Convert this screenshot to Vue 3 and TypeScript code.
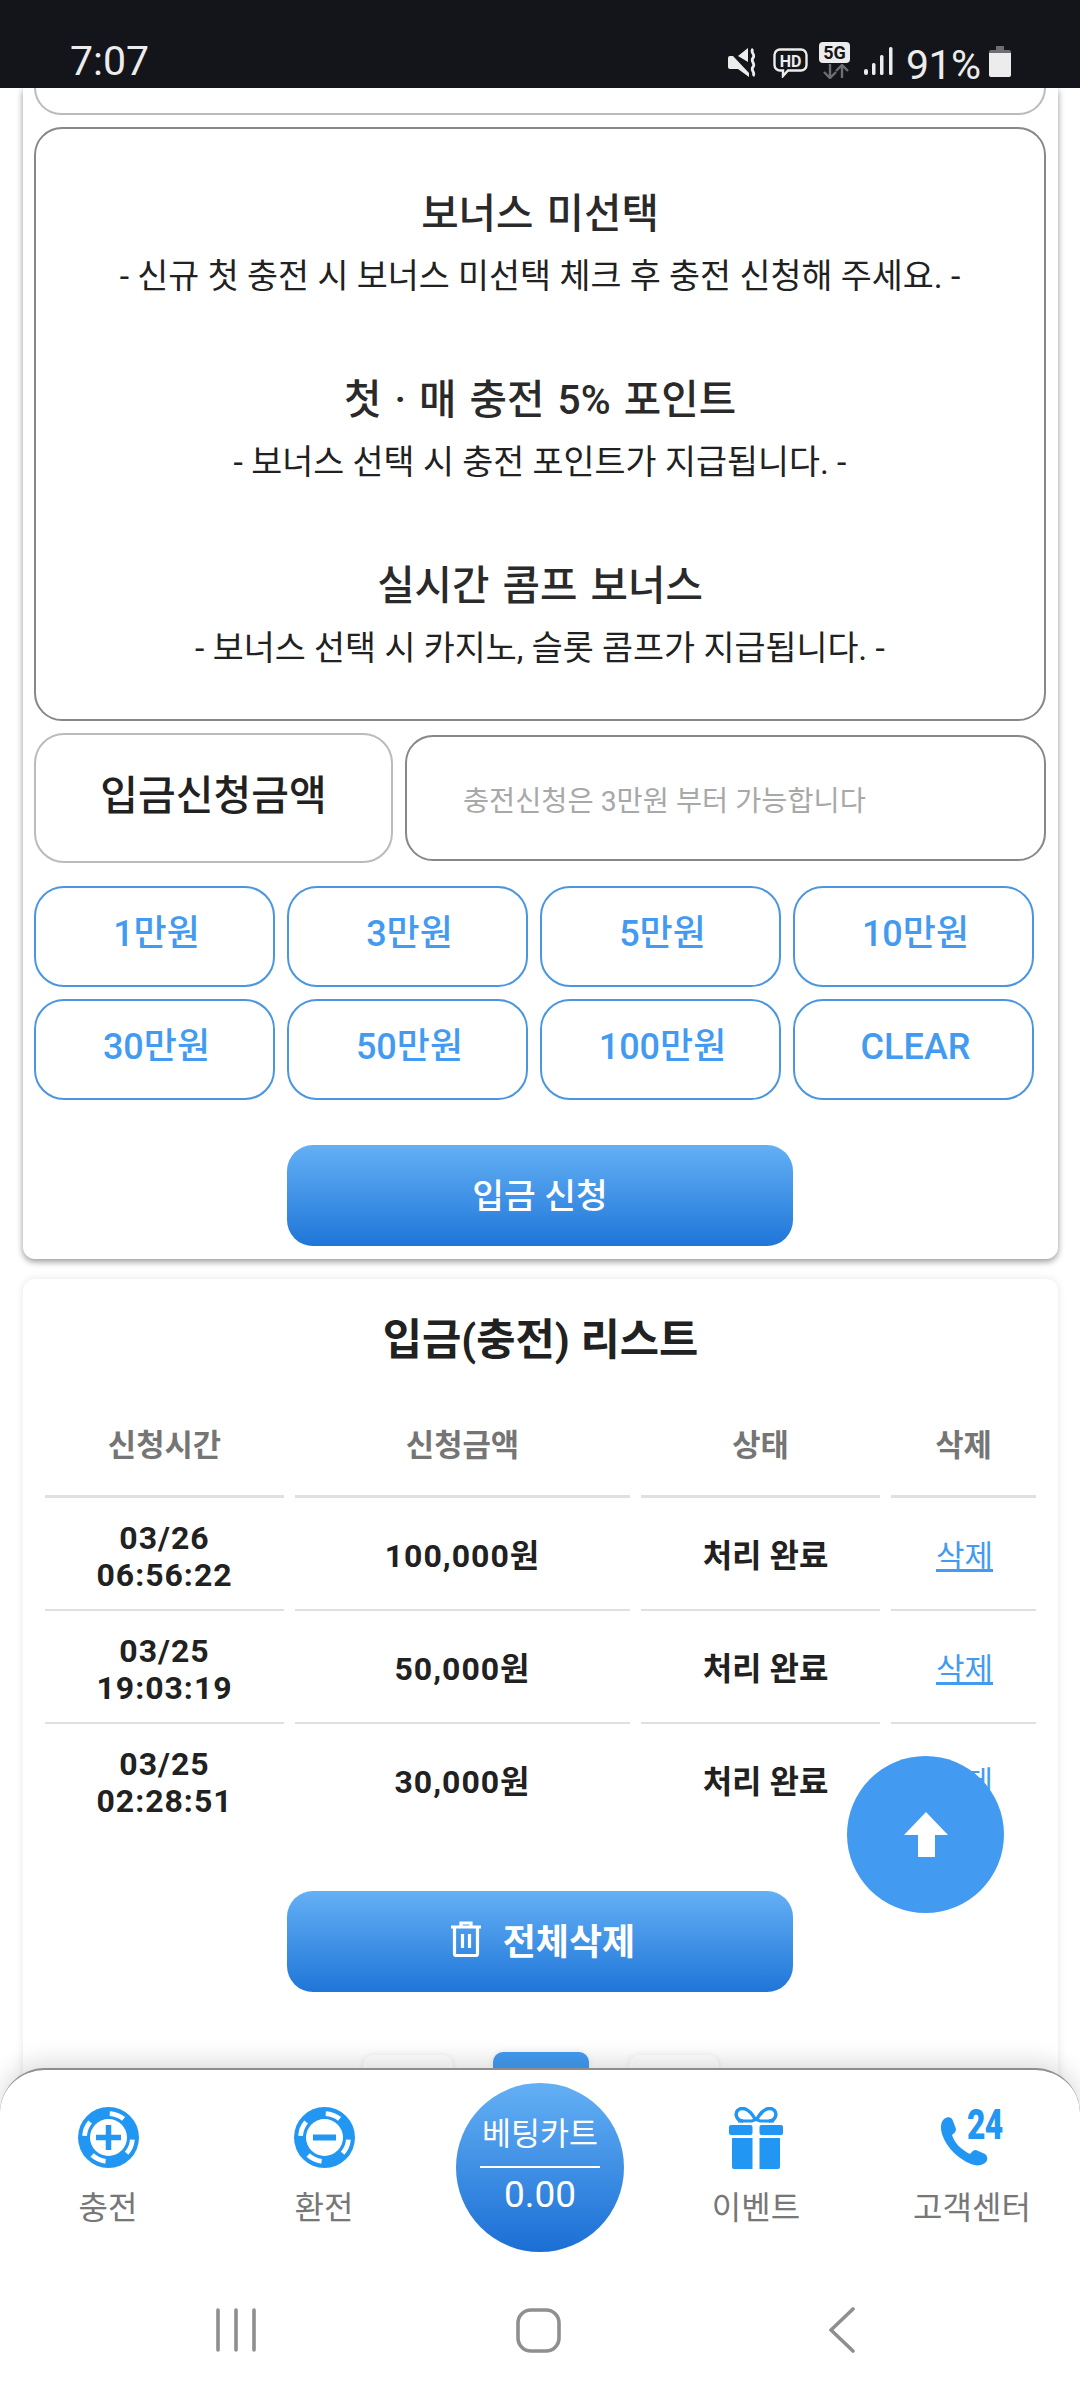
<script setup lang="ts">
const bonuses = [
  { title: '보너스 미선택', note: '- 신규 첫 충전 시 보너스 미선택 체크 후 충전 신청해 주세요. -' },
  { title: '첫 · 매 충전 5% 포인트', note: '- 보너스 선택 시 충전 포인트가 지급됩니다. -' },
  { title: '실시간 콤프 보너스', note: '- 보너스 선택 시 카지노, 슬롯 콤프가 지급됩니다. -' },
]
const amounts = ['1만원', '3만원', '5만원', '10만원', '30만원', '50만원', '100만원', 'CLEAR']
const rows = [
  { date: '03/26', time: '06:56:22', amount: '100,000원' },
  { date: '03/25', time: '19:03:19', amount: '50,000원' },
  { date: '03/25', time: '02:28:51', amount: '30,000원' },
]
// Dash angles for the ring of a casino chip, in degrees.
const chipArcs = [-69, 23, 115, 202]
function arcPath(centre: number): string {
  const r = 24
  const a = ((centre - 18) * Math.PI) / 180
  const b = ((centre + 18) * Math.PI) / 180
  const p = (t: number) => `${(30.5 + r * Math.cos(t)).toFixed(2)} ${(30.5 + r * Math.sin(t)).toFixed(2)}`
  return `M${p(a)}A${r} ${r} 0 0 1 ${p(b)}`
}
const chipDashes = chipArcs.map(arcPath)
</script>

<template>
  <div class="screen">
    <header class="status">
      <span class="clock">7:07</span>
      <div class="status-icons">
        <svg class="ic-mute" width="30" height="29" viewBox="0 0 30 29">
          <path d="M10 8L20 0v14z" fill="#ececec" />
          <path d="M0 10a2 2 0 0 1 2-2h3l16 17v4L10 21H2a2 2 0 0 1-2-2z" fill="#ececec" />
          <path d="M25 1c-3.500 3 3 5.500 0 9s3 5.500 0 9 3 5.500 0 9" fill="none" stroke="#ececec" stroke-width="2.800" />
        </svg>
        <svg class="ic-hd" width="35" height="30" viewBox="0 0 35 30">
          <path d="M7 1.500h21a5.500 5.500 0 0 1 5.500 5.500v10a5.500 5.500 0 0 1-5.500 5.500H15l-5 5.500v-5.500H7A5.500 5.500 0 0 1 1.500 17V7A5.500 5.500 0 0 1 7 1.500z" fill="none" stroke="#ececec" stroke-width="2.400" />
          <text x="17.500" y="18.500" text-anchor="middle" class="hd-text">HD</text>
        </svg>
        <div class="five-g">
          <span class="five-g-tag">5G</span>
          <svg width="28" height="15" viewBox="0 0 28 15">
            <path d="M9 0v13M3 8l6 6 6-6M21 14V1M15 7l6-6 6 6" fill="none" stroke="#6e6e70" stroke-width="2.400" />
          </svg>
        </div>
        <svg class="signal" width="29" height="30" viewBox="0 0 29 30">
          <rect x="0" y="23" width="4" height="6" rx="2" fill="#ececec" />
          <rect x="8" y="17" width="3.500" height="12" rx="1.500" fill="#ececec" />
          <rect x="16" y="9" width="3.500" height="20" rx="1.500" fill="#ececec" />
          <rect x="25" y="1" width="3.500" height="28" rx="1.500" fill="#ececec" />
        </svg>
        <span class="percent">91%</span>
        <svg class="battery" width="22" height="32" viewBox="0 0 22 32">
          <path d="M7 1h8v4h5a2 2 0 0 1 2 2v4H0V7a2 2 0 0 1 2-2h5z" fill="#6e6e70" />
          <path d="M0 8h22v22a2 2 0 0 1-2 2H2a2 2 0 0 1-2-2z" fill="#ececec" />
        </svg>
      </div>
    </header>

    <main class="page">
      <section class="card card-form">
        <div class="cut-box"></div>
        <div class="bonus-box">
          <div v-for="b in bonuses" :key="b.title" class="bonus">
            <h3>{{ b.title }}</h3>
            <p>{{ b.note }}</p>
          </div>
        </div>
        <div class="amount-row">
          <div class="amount-label">입금신청금액</div>
          <div class="amount-input">충전신청은 3만원 부터 가능합니다</div>
        </div>
        <div class="amount-grid">
          <button v-for="a in amounts" :key="a" class="amount-btn">{{ a }}</button>
        </div>
        <button class="primary submit">입금 신청</button>
      </section>

      <section class="card card-list">
        <h2>입금(충전) 리스트</h2>
        <table>
          <colgroup>
            <col class="c-time" /><col class="c-amount" /><col class="c-state" /><col class="c-del" />
          </colgroup>
          <thead>
            <tr><th>신청시간</th><th>신청금액</th><th>상태</th><th>삭제</th></tr>
          </thead>
          <tbody>
            <tr v-for="r in rows" :key="r.time">
              <td>{{ r.date }}<br />{{ r.time }}</td>
              <td>{{ r.amount }}</td>
              <td class="state">처리 완료</td>
              <td class="del"><a>삭제</a></td>
            </tr>
          </tbody>
        </table>
        <button class="primary clear-all">
          <svg width="30" height="36" viewBox="0 0 30 36" fill="none" stroke="#fff" stroke-width="3.200">
            <path d="M0 6h30M10 6V2h10v4" />
            <path d="M3.500 6v27a1.500 1.500 0 0 0 1.500 1.500h20a1.500 1.500 0 0 0 1.500-1.500V6" />
            <path d="M11.500 13v14M18.500 13v14" />
          </svg>
          <span>전체삭제</span>
        </button>
        <nav class="pager">
          <span class="pg"></span>
          <span class="pg pg-on"></span>
          <span class="pg"></span>
        </nav>
      </section>
    </main>

    <button class="to-top" aria-label="위로">
      <svg width="44" height="45" viewBox="0 0 44 45"><path d="M22 0l22 23H31v22H14V23H0z" fill="#fff" /></svg>
    </button>

    <footer class="dock">
      <div class="tabs">
        <div class="tab">
          <svg class="tab-ic" width="61" height="61" viewBox="0 0 61 61">
            <circle cx="30.500" cy="30.500" r="30.500" fill="#2196f3" />
            <path v-for="d in chipDashes" :key="d" :d="d" fill="none" stroke="#fff" stroke-width="4.800" />
            <circle cx="30.500" cy="30.500" r="18.500" fill="#fff" />
            <path d="M30.500 18v25M18 30.500h25" stroke="#2196f3" stroke-width="5.500" />
          </svg>
          <span>충전</span>
        </div>
        <div class="tab">
          <svg class="tab-ic" width="61" height="61" viewBox="0 0 61 61">
            <circle cx="30.500" cy="30.500" r="30.500" fill="#2196f3" />
            <path v-for="d in chipDashes" :key="d" :d="d" fill="none" stroke="#fff" stroke-width="4.800" />
            <circle cx="30.500" cy="30.500" r="18.500" fill="#fff" />
            <path d="M19 30.500h23" stroke="#2196f3" stroke-width="6" />
          </svg>
          <span>환전</span>
        </div>
        <div class="tab tab-cart">
          <div class="cart">
            <span class="cart-name">베팅카트</span>
            <span class="cart-value">0.00</span>
          </div>
        </div>
        <div class="tab">
          <svg class="tab-ic" width="54" height="62" viewBox="0 0 54 62">
            <path d="M27 14C22 3 14-1 9 3c-4 4-1 11 5 11M27 14C32 3 40-1 45 3c4 4 1 11-5 11" fill="none" stroke="#2196f3" stroke-width="3.400" />
            <path d="M9 14h14l4-2 4 2h14" stroke="#2196f3" stroke-width="3" />
            <rect x="0" y="18" width="23.500" height="10" rx="2" fill="#2196f3" />
            <rect x="30.500" y="18" width="23.500" height="10" rx="2" fill="#2196f3" />
            <path d="M3 31h20.500v31H5a2 2 0 0 1-2-2zM30.500 31H51v29a2 2 0 0 1-2 2H30.500z" fill="#2196f3" />
          </svg>
          <span>이벤트</span>
        </div>
        <div class="tab">
          <div class="tab-ic phone">
            <svg width="47" height="49" viewBox="0 0 47 49">
              <path d="M3 2C7-1 11 0 12 4l3 8c0 3-2 4-4 6 3 9 10 15 18 19 2-2 3-4 6-4l9 4c3 2 3 7 0 9-4 3-9 3-14 1C18 42 6 32 1 17-1 10 0 5 3 2z" fill="#2196f3" />
            </svg>
            <span class="phone-24">24</span>
          </div>
          <span>고객센터</span>
        </div>
      </div>
      <div class="softkeys">
        <svg width="40" height="44" viewBox="0 0 40 44" fill="none" stroke="#8f8f8f" stroke-width="3.600" stroke-linecap="round">
          <path d="M2 2v40M20 2v40M38 2v40" />
        </svg>
        <svg class="key-home" width="45" height="45" viewBox="0 0 45 45" fill="none" stroke="#8f8f8f" stroke-width="3.600">
          <rect x="2" y="2" width="41" height="41" rx="13" />
        </svg>
        <svg class="key-back" width="26" height="46" viewBox="0 0 26 46" fill="none" stroke="#8f8f8f" stroke-width="3.600" stroke-linecap="round">
          <path d="M24 2L2 23l22 21" />
        </svg>
      </div>
    </footer>
  </div>
</template>

<style>
body { margin: 0; background: #fff; }
</style>

<style scoped>
.screen {
  position: relative;
  width: 1080px;
  height: 2400px;
  overflow: hidden;
  display: flex;
  flex-direction: column;
  background: #fff;
  font-family: Roboto, "Noto Sans CJK KR", sans-serif;
  color: #212121;
}

/* System status bar */
.status {
  flex: none;
  height: 88px;
  box-sizing: border-box;
  padding: 0 70px;
  display: flex;
  justify-content: space-between;
  align-items: flex-start;
  background: #14151a;
  color: #ececec;
  position: relative;
  z-index: 2;
}
.clock { font-size: 41px; font-weight: 400; line-height: 46px; margin-top: 38px; }
.status-icons { display: flex; align-items: flex-start; position: absolute; left: 728px; top: 42px; }
.ic-mute { margin-top: 6px; }
.ic-hd { margin: 6px 0 0 15px; }
.hd-text { font: 700 16px Roboto, sans-serif; fill: #ececec; }
.five-g { display: flex; flex-direction: column; align-items: center; margin-left: 11px; width: 31px; }
.five-g-tag {
  width: 31px;
  height: 21px;
  background: #ececec;
  color: #14151a;
  border-radius: 4px;
  font: 700 18px/21px Roboto, sans-serif;
  text-align: center;
}
.five-g svg { margin-top: 1px; }
.signal { margin: 4px 0 0 14px; }
.percent { font-size: 41px; font-weight: 400; line-height: 46px; margin-left: 13px; letter-spacing: -0.5px; }
.battery { margin: 3px 0 0 8px; }

.page { flex: 1; min-height: 0; overflow: hidden; }
.card {
  margin: 0 22px 0 23px;
  background: #fff;
  border-radius: 0 0 12px 12px;
  box-shadow: 0 3px 6px rgba(0, 0, 0, 0.35), 0 0 8px rgba(0, 0, 0, 0.08);
  box-sizing: border-box;
}
.card-form { height: 1171px; padding: 0 12px 0 11px; display: flex; flex-direction: column; }

.cut-box {
  height: 27px;
  flex: none;
  box-sizing: border-box;
  border: 2px solid #bbb;
  border-top: 0;
  border-radius: 0 0 28px 28px;
}
.bonus-box {
  flex: none;
  height: 594px;
  margin-top: 12px;
  box-sizing: border-box;
  border: 2px solid #888;
  border-radius: 28px;
  padding-top: 57px;
  text-align: center;
}
.bonus { height: 186px; }
.bonus h3 { margin: 0; font-size: 40.700px; font-weight: 500; line-height: 56px; word-spacing: 3px; color: #2a2a2a; }
.bonus p { margin: 7px 0 0; font-size: 33.700px; font-weight: 400; line-height: 56px; }

.amount-row { flex: none; display: flex; align-items: center; gap: 12px; margin-top: 12px; height: 130px; }
.amount-label {
  width: 359px;
  height: 130px;
  box-sizing: border-box;
  border: 2px solid #bbb;
  border-radius: 30px;
  font-size: 41px;
  font-weight: 500;
  line-height: 122px;
  text-align: center;
}
.amount-input {
  flex: 1;
  height: 126px;
  box-sizing: border-box;
  border: 2px solid #888;
  border-radius: 28px;
  padding-left: 56px;
  font-size: 28.400px;
  line-height: 130px;
  color: #a8a8a8;
}
.amount-grid {
  flex: none;
  display: grid;
  grid-template-columns: repeat(4, 241px);
  grid-auto-rows: 101px;
  column-gap: 12px;
  row-gap: 12px;
  margin-top: 23px;
}
.amount-btn {
  border: 2px solid #4a96e0;
  border-radius: 30px;
  background: #fff;
  color: #429bf0;
  font: 500 36px/1 Roboto, "Noto Sans CJK KR", sans-serif;
  padding: 0 0 5px 4px;
}
.primary {
  display: flex;
  align-items: center;
  justify-content: center;
  width: 506px;
  height: 101px;
  margin-left: 253px;
  border: 0;
  border-radius: 26px;
  background: linear-gradient(#64b0f5, #1f76d8);
  color: #fff;
  font-family: Roboto, "Noto Sans CJK KR", sans-serif;
}
.submit { flex: none; margin-top: 45px; padding-bottom: 6px; font-size: 34.500px; font-weight: 500; }

.card-list {
  height: 1000px;
  margin-top: 20px;
  padding: 0 11px;
  border-radius: 12px 12px 0 0;
  box-shadow: 0 0 8px rgba(0, 0, 0, 0.1);
}
.card-list h2 { margin: 0; padding-top: 28px; font-size: 42.700px; font-weight: 700; line-height: 66px; text-align: center; }
table { width: 100%; margin-top: 17px; border-collapse: separate; border-spacing: 11px 0; table-layout: fixed; }
.c-time, .c-state { width: 239px; }
.c-amount { width: 335px; }
.c-del { width: 145px; }
th {
  height: 105px;
  padding: 0;
  border-bottom: 3px solid #e0e0e0;
  color: #757575;
  font-size: 30.800px;
  font-weight: 700;
  vertical-align: middle;
}
td {
  height: 105px;
  padding: 6px 0 0;
  border-bottom: 2px solid #e0e0e0;
  text-align: center;
  font-size: 32px;
  font-weight: 700;
  line-height: 37px;
  letter-spacing: 1px;
}
tbody tr:last-child td { border-bottom: 0; }
.state { letter-spacing: 0; padding-left: 10px; }
.del { font-size: 31px; font-weight: 400; letter-spacing: 0; padding-left: 2px; }
.del a { color: #429bf0; text-decoration: underline; }

.clear-all { gap: 22px; margin-top: 56px; padding: 0 0 6px 6px; font-size: 36px; font-weight: 700; }
.pager { display: flex; justify-content: center; align-items: flex-start; gap: 40px; margin-top: 60px; }
.pg { width: 90px; height: 60px; margin-top: 3px; border-radius: 10px; background: #fff; box-shadow: 0 0 6px rgba(0, 0, 0, 0.08); }
.pg-on { width: 96px; margin-top: 0; background: #429bf0; }

/* Floating scroll-to-top control */
.to-top {
  position: absolute;
  left: 847px;
  top: 1756px;
  width: 157px;
  height: 157px;
  padding: 0;
  border: 0;
  border-radius: 50%;
  background: #429bf0;
  display: flex;
  align-items: center;
  justify-content: center;
}

/* Fixed bottom dock with the tab bar and the system keys */
.dock {
  position: absolute;
  left: 0;
  right: 0;
  top: 2068px;
  bottom: 0;
  background: #fff;
  border-top: 2px solid #8e8e8e;
  border-radius: 45px 45px 0 0;
  box-shadow: 0 -6px 24px rgba(0, 0, 0, 0.14);
}
.tabs { display: grid; grid-template-columns: repeat(5, 216px); height: 186px; }
.tab { display: flex; flex-direction: column; align-items: center; font-size: 32px; line-height: 40px; color: #777; position: relative; }
.tab-ic { margin-top: 37px; margin-bottom: 16px; }
.tab > span { position: absolute; top: 118px; white-space: nowrap; }
.tab-cart { justify-content: flex-start; }
.cart {
  width: 168px;
  height: 169px;
  margin-top: 13px;
  border-radius: 50%;
  background: linear-gradient(#64b0f5, #1b6fd4);
  color: #fff;
  display: flex;
  flex-direction: column;
  align-items: center;
}
.cart-name { width: 120px; height: 53px; margin-top: 30px; border-bottom: 2px solid #fff; font-size: 31.500px; line-height: 43px; text-align: center; white-space: nowrap; }
.cart-value { font-size: 37px; line-height: 48px; margin-top: 3px; }
.phone { position: relative; width: 63px; height: 60px; }
.phone svg { position: absolute; left: 0; top: 10px; }
.phone-24 {
  position: absolute;
  left: 26px;
  top: -5px;
  color: #2196f3;
  font: 900 43px/44px Roboto, sans-serif;
  letter-spacing: -1px;
  transform: scaleX(0.74);
  transform-origin: left;
}
.softkeys { display: flex; align-items: center; height: 44px; margin: 52px 0 0 216px; }
.key-home { margin-left: 260px; }
.key-back { margin-left: 268px; }
</style>
